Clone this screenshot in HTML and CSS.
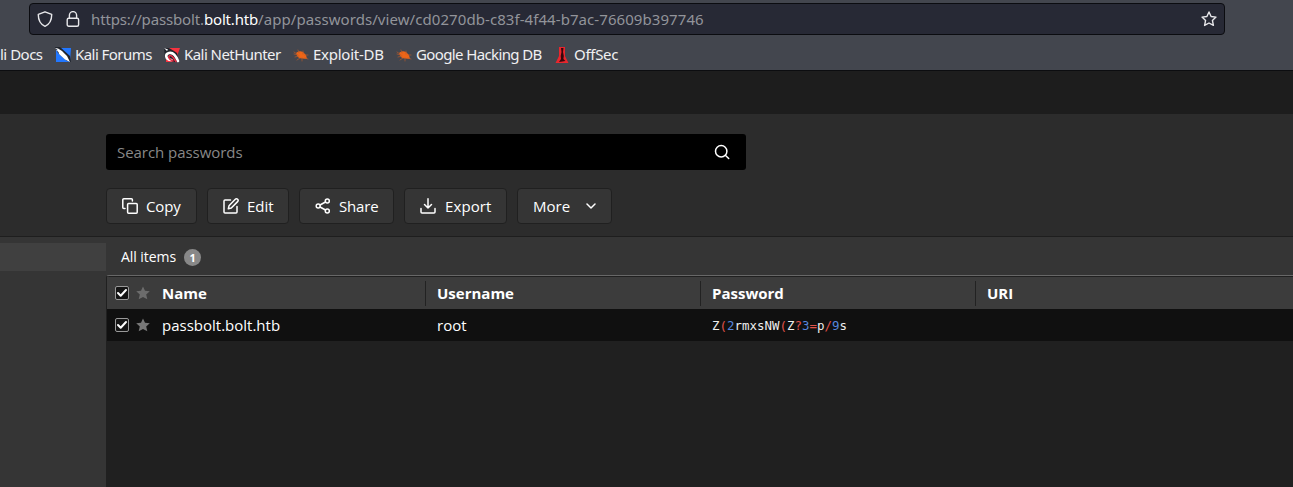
FILE: index.html
```html
<!DOCTYPE html>
<html lang="en">
<head>
<meta charset="utf-8">
<title>Passbolt</title>
<link rel="stylesheet" href="styles.css">
</head>
<body>
<header class="browser">
  <div class="urlbar">
    <svg class="shield" width="16" height="16" viewBox="0 0 16 16"><path d="M8 .8 14.700 3.400C14.800 9 12.600 13.300 8 15.300 3.400 13.300 1.200 9 1.300 3.400Z"/></svg>
    <svg class="lock" width="14" height="16" viewBox="0 0 14 16"><rect x="1.200" y="7.200" width="11.400" height="8" rx="1.500"/><path d="M3.400 7V4.200a3.600 3.600 0 0 1 7.200 0V7"/></svg>
    <div class="url"><span class="sub">https://passbolt.</span><b>bolt.htb</b><span class="path">/app/passwords/view/cd0270db-c83f-4f44-b7ac-76609b397746</span></div>
    <svg class="fav" width="16" height="16" viewBox="0 0 16 16"><path d="m8 1 2.100 4.500 4.900.6-3.600 3.300 1 5L8 12l-4.400 2.400 1-5L1 6.100l4.900-.6Z"/></svg>
  </div>
  <nav class="bookmarks">
    <a class="docs"><span>li Docs</span></a>
    <a class="forums"><svg width="16" height="16" viewBox="0 0 16 16"><path fill="#2277ff" d="M1 1h15l-1 14H1z"/><path fill="#20242c" d="M0 0h5l10 9 1 6-4-1-9-8z"/><path fill="#fff" d="M0 1l3 .5 4 2.500 5 5 3 6-5-2.500-6-5.500-.5-2L1 3l2 .2z"/></svg><span>Kali Forums</span></a>
    <a class="hunter"><svg width="16" height="16" viewBox="0 0 16 16"><path fill="#f5333f" d="M2 1h14l-3 8 2 6H2z"/><path fill="#20242c" d="M0 1h5l5 3 3 2 2 9H9L1 11z"/><path fill="none" stroke="#fff" stroke-width="2.600" d="M7.500 13C1 12.500 1 7 5 6s7 3 9 8"/><path fill="none" stroke="#e52d45" stroke-width="1.600" d="M9 14C4 12 4 9 6 8.500s4 3 6 6"/><path fill="#fff" d="m0 1 4 1.500L3 4z"/></svg><span>Kali NetHunter</span></a>
    <a class="exploit"><svg width="16" height="16" viewBox="0 0 16 16"><path class="bug" d="M3 6Q6 3 10 5l3 3 1 4-4.500-.5Q4 11.500 3 6Z"/><path class="legs" d="M1 7l4 1M2 10l4-1M4 13l3-2M5 3l1 3M10 4v3M12 8l3 0M12 11l3 1M9 11l0 3M1 5l3 2"/></svg><span>Exploit-DB</span></a>
    <a class="google"><svg width="16" height="16" viewBox="0 0 16 16"><path class="bug" d="M3 6Q6 3 10 5l3 3 1 4-4.500-.5Q4 11.500 3 6Z"/><path class="legs" d="M1 7l4 1M2 10l4-1M4 13l3-2M5 3l1 3M10 4v3M12 8l3 0M12 11l3 1M9 11l0 3M1 5l3 2"/></svg><span>Google Hacking DB</span></a>
    <a class="offsec"><svg width="14" height="16" viewBox="0 0 14 16"><path fill="#e8262d" d="M4 0h6v9l3.500 7H.5L4 9z"/><path fill="#35070c" d="M6 1h2.500l-.5 4 .8 4-.4 3 2 2-3 .5L4 15l2-3-.3-3 .8-4z"/></svg><span>OffSec</span></a>
  </nav>
</header>
<div class="strip"></div>
<section class="tools">
  <div class="search"><span>Search passwords</span><svg width="16" height="16" viewBox="0 0 16 16"><circle cx="7.200" cy="7.200" r="5.700"/><path d="m11.300 11.300 3.400 3.200"/></svg></div>
  <div class="actions">
    <button class="copy"><svg width="16" height="16" viewBox="0 0 16 16"><rect x="5.600" y="5.600" width="9.600" height="9.600" rx="1"/><path d="M3 10.400H1.800a1 1 0 0 1-1-1V1.800a1 1 0 0 1 1-1h7.600a1 1 0 0 1 1 1V3"/></svg><span>Copy</span></button>
    <button class="edit"><svg width="16" height="16" viewBox="0 0 16 16"><path d="M7.500 2H2a1 1 0 0 0-1 1v11a1 1 0 0 0 1 1h11a1 1 0 0 0 1-1V8.500"/><path d="M12.300 1.300a1.600 1.600 0 0 1 2.300 2.300L8.300 10l-3 .8.700-3Z"/></svg><span>Edit</span></button>
    <button class="share"><svg width="16" height="16" viewBox="0 0 16 16"><circle cx="12.300" cy="3" r="2"/><circle cx="3.200" cy="8" r="2"/><circle cx="12.300" cy="13" r="2"/><path d="m5 7 5.500-3M5 9l5.500 3"/></svg><span>Share</span></button>
    <button class="export"><svg width="16" height="16" viewBox="0 0 16 16"><path d="M1 10.500V14a1 1 0 0 0 1 1h12a1 1 0 0 0 1-1v-3.500M8 .8V10M4.500 6.500 8 10l3.500-3.500"/></svg><span>Export</span></button>
    <button class="more"><span>More</span><svg width="10" height="6" viewBox="0 0 10 6"><path d="m1 1 4 4 4-4"/></svg></button>
  </div>
</section>
<main class="workspace">
  <aside><div class="selected"></div></aside>
  <section class="content">
    <div class="crumbs"><span class="all">All items</span><span class="count">1</span></div>
    <div class="grid">
      <div class="row head">
        <div class="select"><i class="box"><svg width="14" height="14" viewBox="0 0 14 14"><path d="m3 7 2.700 2.700L11 4"/></svg></i><svg class="star" width="14" height="14" viewBox="0 0 14 14"><path d="m7 .5 2 4.300 4.800.5-3.600 3.200 1.100 4.800L7 10.900l-4.300 2.400 1.100-4.800L.2 5.300l4.800-.5Z"/></svg></div>
        <div class="cell name"><span>Name</span></div><div class="cell"><span>Username</span></div><div class="cell"><span>Password</span></div><div class="cell last"><span>URI</span></div>
      </div>
      <div class="row data">
        <div class="select"><i class="box"><svg width="14" height="14" viewBox="0 0 14 14"><path d="m3 7 2.700 2.700L11 4"/></svg></i><svg class="star" width="14" height="14" viewBox="0 0 14 14"><path d="m7 .5 2 4.300 4.800.5-3.600 3.200 1.100 4.800L7 10.900l-4.300 2.400 1.100-4.800L.2 5.300l4.800-.5Z"/></svg></div>
        <div class="cell name"><span>passbolt.bolt.htb</span></div><div class="cell"><span>root</span></div><div class="cell secret"><span>Z<em>(</em><u>2</u>rmxsNW<em>(</em>Z<em>?</em><u>3</u><em>=</em>p<em>/</em><u>9</u>s</span></div><div class="cell last"></div>
      </div>
    </div>
  </section>
</main>
</body>
</html>
```
FILE: styles.css
```css
* { box-sizing: border-box; }
body { margin: 0; height: 487px; overflow: hidden; display: flex; flex-direction: column; background: #202020; color: #fff; font: 15px/20px "Open Sans", sans-serif; }
svg { flex: none; fill: none; stroke: #fff; stroke-width: 1.5; stroke-linecap: round; stroke-linejoin: round; }
.browser { flex: none; height: 71px; padding: 3px 0 0; background: #43464e; border-bottom: 1px solid #0c0d10; font-family: "Noto Sans", sans-serif; font-size: 15px; }
.urlbar { width: 1196px; height: 32px; margin-left: 29px; padding: 0 7px; display: flex; align-items: center; background: #272935; border: 1px solid #0b0c10; border-radius: 4px; }
.urlbar svg { stroke: #e8e8eb; stroke-width: 1.4; }
.lock { margin-left: 13px; }
.url { flex: 1; margin-left: 11px; color: #92949a; white-space: nowrap; }
.url b { color: #fff; font-weight: 400; letter-spacing: -.18px; }
.sub { letter-spacing: -.14px; }
.path { letter-spacing: .07px; }
.bookmarks { height: 35px; display: flex; align-items: center; color: #f0f0f2; white-space: nowrap; padding-top: 4px; letter-spacing: -.5px; }
.bookmarks a { display: flex; align-items: center; flex: none; }
.bookmarks span { padding-bottom: 2px; }
.bookmarks svg { stroke: none; margin-right: 4px; }
.docs { width: 55px; }
.forums { width: 109px; letter-spacing: -.55px; }
.hunter { width: 129px; letter-spacing: -.55px; }
.exploit { width: 103px; letter-spacing: -.25px; }
.google { width: 159px; letter-spacing: -.62px; }
.bookmarks .offsec { letter-spacing: -.3px; }
.offsec svg { margin-right: 5px; }
.bookmarks .bug { fill: #ee6517; }
.bookmarks .legs { stroke: #b3592b; stroke-width: .7; }
.strip { flex: none; height: 43px; background: #1d1d1d; }
.tools { flex: none; height: 123px; padding: 20px 0 0 106px; background: #2c2c2c; border-bottom: 1px solid #1e1e1e; }
.search { width: 640px; height: 36px; padding: 0 16px 0 11px; display: flex; align-items: center; justify-content: space-between; background: #000; border-radius: 3px; color: #888; letter-spacing: -.05px; }
.actions { display: flex; margin-top: 18px; gap: 10px; }
button { height: 36px; padding: 0 0 0 15px; display: flex; align-items: center; gap: 8px; background: #353535; border: 1px solid #202020; border-radius: 4px; color: #fff; font: inherit; white-space: nowrap; }
.copy { width: 91px; letter-spacing: -.1px; }
.edit { width: 82px; }
.share { width: 95px; letter-spacing: -.15px; }
.export { width: 103px; gap: 9px; letter-spacing: .1px; }
.more { width: 95px; gap: 16px; }
.workspace { flex: 1; display: flex; background: #353535; }
aside { width: 106px; padding-top: 6px; }
.selected { height: 28px; background: #404040; }
.content { flex: 1; display: flex; flex-direction: column; }
.crumbs { height: 38px; padding: 2px 0 0 15px; display: flex; align-items: center; gap: 8px; font-size: 14px; letter-spacing: -.05px; }
.count { width: 17px; height: 17px; border-radius: 50%; background: #888; font-size: 11px; line-height: 17px; font-weight: 700; text-align: center; }
.grid { flex: 1; border-top: 1px solid #686868; border-left: 1px solid #202020; background: #202020; border-top-left-radius: 3px; padding-top: 1px; }
.row { height: 32px; display: flex; align-items: center; }
.head { background: #3c3c3c; font-weight: 700; }
.data { background: #101010; }
.select { width: 55px; padding-left: 8px; display: flex; align-items: center; gap: 7px; }
.box { width: 14px; height: 14px; border: 1px solid #999; border-radius: 2px; background: #151515; display: flex; align-items: center; justify-content: center; }
.box svg { stroke-width: 2; }
.star { fill: #777; stroke: none; }
.head .star { fill: #6c6c6c; }
.cell { width: 275px; height: 32px; padding-left: 11px; display: flex; align-items: center; }
.cell.name { width: 264px; padding-left: 0; }
.head .cell { height: 25px; border-right: 1px solid #222; }
.head .last { border: 0; }
.secret { font: 12.450px "DejaVu Sans Mono", monospace; color: #eee; }
.secret em { font-style: normal; color: #e0524b; }
.secret u { text-decoration: none; color: #5685dc; }
```
